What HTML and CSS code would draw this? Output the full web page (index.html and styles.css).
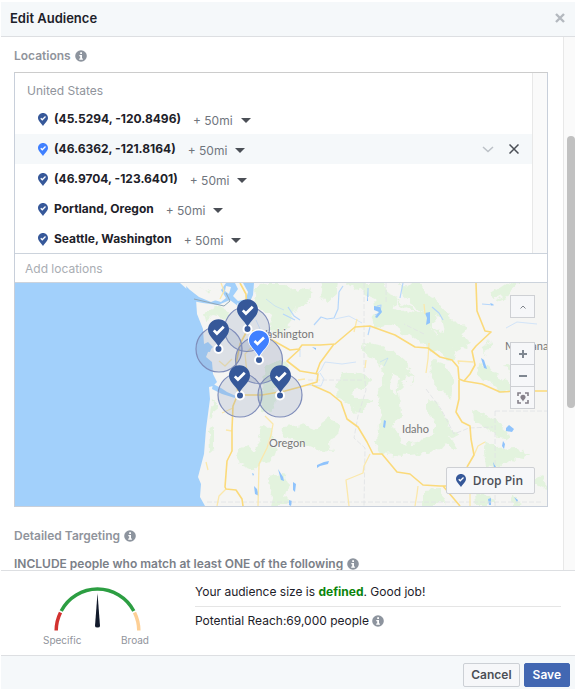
FILE: index.html
```html
<!DOCTYPE html>
<html lang="en">
<head>
<meta charset="utf-8">
<meta name="viewport" content="width=device-width, initial-scale=1">
<title>Edit Audience</title>
<link rel="stylesheet" href="styles.css">
</head>
<body>
<svg class="defs" aria-hidden="true">
  <symbol id="pin" viewBox="0 0 20 26">
    <path d="M10 0C4.400 0 0 4.300 0 9.800c0 6 6.500 9.700 10 16.200 3.500-6.500 10-10.200 10-16.200C20 4.300 15.600 0 10 0z" fill="currentColor"/>
    <path d="M5.500 10.500l3 3 6.500-6.500" fill="none" stroke="#fff" stroke-width="2.600"/>
  </symbol>
  <symbol id="info" viewBox="0 0 12 12">
    <circle cx="6" cy="6" r="5.800" fill="#8d949e"/>
    <path d="M5.200 2.200h1.800v1.700H5.200zM4.300 5h2.700v3.600h.9v1.200H4.200V8.600h1V6.200h-.9z" fill="#fff"/>
  </symbol>
</svg>
<main class="dialog">
  <header class="head">
    <h1>Edit Audience</h1>
    <button class="icon-btn" aria-label="Close"><svg width="10" height="10" viewBox="0 0 10 10"><path d="M1 1l8 8M9 1l-8 8" stroke="#b4b9bf" stroke-width="2.400"/></svg></button>
  </header>
  <div class="body">
    <div class="content">
      <h2>Locations <svg class="info"><use href="#info"/></svg></h2>
      <section class="picker">
        <div class="list">
          <div class="rows">
            <p class="country">United States</p>
            <ul>
              <li><svg class="pin"><use href="#pin"/></svg><b>(45.5294, -120.8496)</b><button class="radius">+ 50mi <i class="caret"></i></button></li>
              <li class="active"><svg class="pin"><use href="#pin"/></svg><b>(46.6362, -121.8164)</b><button class="radius">+ 50mi <i class="caret"></i></button>
                <span class="tools">
                  <button class="icon-btn" aria-label="Expand"><svg width="12" height="10" viewBox="0 0 12 10"><path d="M1 3l5 4.500L11 3" fill="none" stroke="#bcc1c7" stroke-width="1.500"/></svg></button>
                  <button class="icon-btn" aria-label="Remove"><svg width="10" height="10" viewBox="0 0 10 10"><path d="M.5.500l9 9M9.500.500l-9 9" stroke="#4b4f56" stroke-width="1.500"/></svg></button>
                </span></li>
              <li><svg class="pin"><use href="#pin"/></svg><b>(46.9704, -123.6401)</b><button class="radius">+ 50mi <i class="caret"></i></button></li>
              <li><svg class="pin"><use href="#pin"/></svg><b>Portland, Oregon</b><button class="radius">+ 50mi <i class="caret"></i></button></li>
              <li><svg class="pin"><use href="#pin"/></svg><b>Seattle, Washington</b><button class="radius">+ 50mi <i class="caret"></i></button></li>
            </ul>
          </div>
          <div class="track"></div>
        </div>
        <input class="add" type="text" placeholder="Add locations" aria-label="Add locations">
        <div class="map">
          <svg class="canvas" viewBox="15 284 532 223" preserveAspectRatio="xMidYMid slice" role="img" aria-label="Map of the targeted locations">
            <defs>
              <filter id="rough" x="-5%" y="-5%" width="110%" height="110%" color-interpolation-filters="sRGB">
                <feTurbulence type="fractalNoise" baseFrequency=".09" numOctaves="3" seed="4"/>
                <feDisplacementMap in="SourceGraphic" scale="13" xChannelSelector="R" yChannelSelector="G"/>
              </filter>
              <clipPath id="land"><path d="M181 280L196 300 197 315 203 330 204 345 211 352 209 357 212 362 213 375 216 385 211 388 212 400 208 430 206 455 200 478 203 485 202 498 207 510H550V280z"/></clipPath>
            </defs>
            <path fill="#f5f5f3" d="M15 284h532v223H15z"/>
            <g fill="#e3f3de" filter="url(#rough)" clip-path="url(#land)">
              <path d="M196 286l18 8-3 4-12-5zM204 314l14-7 12 5-3 8-12-2-9 4zM252 293l14-9h18l12 10 14-6 4 8-15 11-8 16-12 14-10-6 4-14-12-4zM266 365l18-6 5 8-16 8 3 14-8 10-6-12zM280 305l20-10 6 8-14 10-8 14-8-4z"/>
              <path d="M322 284l18-1-3 12-13 9-4-8zM346 284h38l8 14 20 8 16 12 8 18 11 6 10 17-4 3-22-11-21-15-21-8-13 2-7-14 9-2-2-14-17-7z"/>
              <path d="M364 344l13 3 20 10 15 13 2 13-15 9 2 24-8 10 9 18 14-2 22-8 9 8-7 8-17 4-19 3-20-3-10-13 7-14-2-34 6-16-8-14-13-10z"/>
              <path d="M422 293l11 4 12 15 17 17 7 18-12 8-16-12-11-20-12-15zM400 284l22 1 8 14-10 10-17-13zM431 360l15 5 6 16-4 17-6-7-10-11zM428 398l9 7 13 22 8 9-5 3-17-12-8-17zM436 424l12 10 8 13-6 3-17-17z"/>
              <path d="M337 383l7-9 16-2 9 7-1 7-12 3-5 6 12 8-3 5-16-4-8-8zM284 428l18-3 12 5 15-10 12 5-3 12-9 6 2 8-16 2-14-5-4-9-14-3zM342 390l12 9 18 2-8 10-16 1zM260 390l16 5-2 14-10 4-6-10z"/>
              <path d="M210 399l7 6-2 17-7-4zM208 431l7-1v21l-6 1zM238 456l5-8 12 4 8-10 14 5-3 15-14 1-6 8-14-6zM263 425l8 7-3 14-7 3-4-13zM270 475l14 3 6 12-4 17h-15l3-14z"/>
              <path d="M473 410l15 6 19 15 3 9-14-2-13-10-9-4zM480 362l8 4 8 11 15 9 4 9-14-3-17-12-8-5zM502 368l14-4 14 11-7 4-15-3zM483 442l15 7 18-1 13 8-4 6-17-2-11 10-11-3zM484 347l12-8-5 11-8 4zM536 480l8-3 4 9-8 4zM424 491l14-1 8 9-4 8h-18zM474 496l16 1 5 10h-19zM510 496l12 6-8 5zM492 294l15-10 12 2-10 9-15 7z"/>
            </g>
            <g fill="#f5f5f3" filter="url(#rough)">
              <path d="M393 377l7 3-3 15-5-4zM405 372l8 7-5 18-6-5zM356 293l7 5-3 7-8-5zM433 316l9 8 2 10-9-6zM381 365l5 9-4 6-4-9zM395 300l9 8 11 3-7 5-12-6z"/>
            </g>
            <path fill="#a2d0fb" d="M15 284h165l9 8 7 8 1 15 6 15 1 15 4-2 5 5-5 5-2 5 6 5 1 12 4 8-4 4-4 1 1 12-4 30-2 25-6 23 3 7-1 13 5 9H15z"/>
            <path fill="#a2d0fb" d="M186 284l12 4 13 12 10 3 5-4-5-8 5-7h9l3 6-5 7 5 5 8-2 2-7-5-9h11l-1 12-4 9 3 9-3 16-4-2 1-12-8-9-8-6-12 5-15-2-16-3z"/>
            <path fill="#a2d0fb" d="M203 348l8 2-1 3-7-1zM213 385l8 4 6 4 9 4-1 2-13-4-10-5z"/>
            <g fill="#f5f5f3"><path d="M183 284l9 0 13 7 11 10-5 2-12-5-9-7zM226 287l5 1-2 7-4-3zM242 296l4-3-1 9-3-1zM237 304l4 3 1 7-4-5zM207 287l9-3 6 2-4 5z"/></g>
            <path d="M194 300l17 4 13 3 6-5-4-8" fill="none" stroke="#91a7b7"/>
            <g fill="none" stroke="#b5d6fb" stroke-linejoin="round">
              <path d="M343 287l-4 6-1 17-4 9-7 1-6-2-7 8M288 308l6 9 6 4M283 315l12 6M368 289v9M403 284l-3 15M432 308l7 6 4 7M377 307l4-1-1 8-5 2M370 328l-2 8M482 305l12 1" stroke-width="1.200"/>
              <path d="M316 376l5-5 4-8 17 2 14-2M320 374l4 6-3 7-14-1M300 350v8M335 320l14-3 13 7M380 363l8-4-4 8M506 329l11-6 20 2M266 300l9 7 9 4M256 321l4 9" stroke-width="1" opacity=".55"/>
            </g>
            <g fill="#8fc3fc">
              <path d="M374 307l6 1 2 5-5 6-2-1 4-5-5-2zM425 314l5-1v11l-4 2 1-7zM481 359l3 2 3 9-3-1zM384 421l2 1-1 7-2-1zM317 466l7-3 5-1-1 3-8 2-3 2zM293 483l3 2-1 8-2-2zM254 487l3 3 2 7-4-2zM289 501l3 1-1 5-2-1zM278 470l5 8 1 4-3-1zM252 474l2 1-1 2zM506 429l3-3 5 4-2 3-6-1zM503 442l2 3-1 5-2-3zM488 500l3-1v7h-2zM514 498l4 3-1 2zM368 292v10h-1zM490 304l3 1-1 2zM493 463l3 5h-2zM312 348l4 1v2z"/>
            </g>
            <g fill="none" stroke="#e0e2e4" stroke-width=".8" stroke-dasharray="5 2">
              <path d="M364 284v90l2 17-8 26-4 22 11 10-1 58M207 503h336M386 284v21M308 381h56M424 335l-20-10M426 390l15 20 13 25 15-6 24-1M495 412v95M495 412h52"/>
            </g>
            <g fill="none" stroke="#fbe8ab" stroke-width="1.300" stroke-linejoin="round">
              <path d="M221 284l3 8-4 8M265 417l8 8-2 11-4 13-8 16-1 42M226 490l-7 7-2 10M370 455l-6 12-1 7-17 7 3 26M418 487l-1 8-2 12M474 456l4-9 7-4M470 490v17M357 320l-3 13M366 361l-1 8M305 380l-7 1M424 305l1 10M429 344l-1 16-2 14M459 365l-1-3 15 1M255 345l-10 10 2 19M232 360l-7 7-6-5M206 463l2 8M232 432l-6-1M222 414l11-5"/>
            </g>
            <g fill="none" stroke="#fbda7a" stroke-width="1.600" stroke-linejoin="round">
              <path d="M240 284l6 11 1 25 1 10-8 15-5 25 3 25-5 12-1 23v22l-5 10-2 26 1 2 10 1 6 9 1 7M248 330l17 7 25 14 9-1 3-4h18l15-1 20-17 15-1 25 9 20 12 13 1 12 9 12 3 6 7 1 12 5 2 18 3 18 8 18-1h29"/>
              <path d="M300 350l-13 12 13 10 18 3-1 8-17 5-15 4-23 4-22 0M334 345l-14 19-4 11M312 386l18 8 11 9 6 17 11 8 9 15 6 12h9l15 18 13 2 13 11 17 1h15M443 487l17 20M476 284l1 28 8 20 6 1-15 14-4 5 3 14-5 9-6 7M459 381v19l-3 13 6 10 8 4 1 13 3 16-7 12"/>
            </g>
            <g class="places"><text x="256" y="339">Washington</text><text x="269" y="448">Oregon</text><text x="402" y="434">Idaho</text><text x="505" y="351">Montana</text></g>
            <g fill="#8395bc" fill-opacity=".22" stroke="#7f8dba" stroke-width="1.200">
              <circle cx="247" cy="330" r="22.500"/><circle cx="219" cy="350" r="23"/><circle cx="240" cy="396" r="22"/><circle cx="280" cy="396" r="22"/><circle cx="259" cy="361" r="23.500" fill="#6878a5"/>
            </g>
            <g fill="#365899" stroke="#fff" stroke-width="2">
              <circle cx="247.500" cy="330" r="4"/><circle cx="218.500" cy="350" r="4"/><circle cx="240" cy="396.500" r="4"/><circle cx="280" cy="396.500" r="4"/><circle cx="259" cy="361" r="4"/>
            </g>
            <g color="#365899">
              <use href="#pin" x="237" y="300" width="21" height="28"/>
              <use href="#pin" x="208" y="320" width="21" height="28"/>
              <use href="#pin" x="229" y="366" width="21" height="28"/>
              <use href="#pin" x="270" y="366" width="21" height="28"/>
            </g>
            <path d="M259 330c-6 0-11 5-11 11 0 6 7 10 11 18 4-8 11-12 11-18 0-6-5-11-11-11z" fill="#fff"/>
            <use href="#pin" x="249" y="331" width="20" height="27" color="#4080ff"/>
          </svg>
          <div class="controls">
            <button aria-label="Collapse map"><svg width="8" height="6" viewBox="0 0 8 6"><path d="M1.500 4.500L4 2l2.500 2.500" fill="none" stroke="#7f848c"/></svg></button>
            <div class="zoom">
              <button aria-label="Zoom in"><svg width="8" height="8" viewBox="0 0 8 8"><path d="M4 0v8M0 4h8" stroke="#7f8791" stroke-width="2"/></svg></button>
              <button aria-label="Zoom out"><svg width="8" height="8" viewBox="0 0 8 8"><path d="M0 4h8" stroke="#7f8791" stroke-width="2"/></svg></button>
              <button aria-label="Fit pins"><svg width="12" height="12" viewBox="0 0 12 12"><path d="M4 1H1v3M8 1h3v3M4 11H1V8M8 11h3V8" fill="none" stroke="#858089" stroke-width="1.600"/><path d="M6 2.700a2.600 2.600 0 0 0-2.600 2.600C3.400 7 5.300 7.500 6 9.500c.7-2 2.600-2.500 2.600-4.200A2.600 2.600 0 0 0 6 2.700z" fill="#858089"/></svg></button>
            </div>
          </div>
          <button class="drop"><svg class="pin"><use href="#pin"/></svg>Drop Pin</button>
        </div>
      </section>
      <h2 class="detail">Detailed Targeting <svg class="info"><use href="#info"/></svg></h2>
      <h3>INCLUDE people who match at least ONE of the following <svg class="info"><use href="#info"/></svg></h3>
    </div>
    <div class="scroll"><div class="thumb"></div></div>
  </div>
  <section class="summary">
    <div class="gauge">
      <svg width="90" height="48" viewBox="52 584 90 48" aria-hidden="true">
        <g fill="none" stroke-width="3.500">
          <path d="M56.200 629.500A41 41 0 0 1 60.500 611.500" stroke="#d2322f"/>
          <path d="M61.200 610A41 41 0 0 1 133.800 610" stroke="#2c9e42"/>
          <path d="M134.500 611.500A41 41 0 0 1 138.800 629.500" stroke="#fdcf95"/>
        </g>
        <path d="M97.500 592L95 625a2.500 1.500 0 0 0 5 0z" fill="#121a2b"/>
      </svg>
      <div class="ends"><span>Specific</span><span>Broad</span></div>
    </div>
    <div class="facts">
      <p>Your audience size is <strong>defined</strong>. Good job!</p>
      <p>Potential Reach:69,000 people <svg class="info"><use href="#info"/></svg></p>
    </div>
  </section>
  <footer class="foot"><button class="btn">Cancel</button><button class="btn primary">Save</button></footer>
</main>
</body>
</html>
```

FILE: styles.css
```css
* { box-sizing: border-box; }
body { margin: 0; background: #fff; color: #1d2129; font: 12px/16px Inter, "Liberation Sans", sans-serif; }
h1, h2, h3, p, ul { margin: 0; padding: 0; }
button { font: inherit; color: inherit; cursor: pointer; }
.defs { position: absolute; width: 0; height: 0; }
.dialog { display: flex; flex-direction: column; height: 100vh; padding: 2px 0 0 1px; }

.head { display: flex; align-items: center; justify-content: space-between; flex: none; height: 35px; padding: 0 10px 2px 9px; background: #f5f8fa; border-bottom: 1px solid #dddfe2; }
h1 { font-size: 13px; line-height: 20px; font-weight: 600; }
.icon-btn { display: flex; padding: 0; border: 0; background: none; }

.body { display: flex; flex: 1; min-height: 0; overflow: hidden; }
.content { flex: 1; min-width: 0; padding: 11px 15px 0 13px; }
h2, h3 { display: flex; align-items: center; gap: 4px; font-size: 12px; line-height: 16px; font-weight: 600; color: #90949c; }
h3 { margin-top: 12px; color: #7b8088; white-space: nowrap; }
.info { flex: none; width: 12px; height: 12px; }
.scroll { flex: none; width: 12px; padding: 99px 0 0 3px; border-left: 1px solid #e8e8e8; background: #fafafa; }
.thumb { width: 8px; height: 272px; border-radius: 4px; background: #c1c1c1; }

.picker { margin-top: 8px; border: 1px solid #c8cfda; border-top-color: #ccc; }
.list { display: flex; height: 180px; overflow: hidden; }
.rows { flex: 1; }
.track { flex: none; width: 15px; border-left: 1px solid #e8e8e8; background: #fafafa; }
.country { padding: 10px 12px 5px; color: #90949c; }
ul { list-style: none; }
li { display: flex; align-items: center; height: 30px; padding: 0 13px 0 23px; }
li b { margin: 0 12px 0 6px; color: #1d2129; font-weight: 700; }
.active { background: #f5f8fa; }
.pin { flex: none; width: 10px; height: 13px; color: #365899; }
.active .pin { color: #4080ff; }
.radius { display: flex; align-items: center; gap: 8px; padding: 3px 0 0; border: 0; background: none; color: #70757d; }
.caret { border: 5px solid transparent; border-top-color: #4b4f56; border-bottom: 0; }
.tools { display: flex; align-items: center; gap: 15px; margin-left: auto; }
.add { display: block; width: 100%; height: 30px; padding: 0 10px; border: 1px solid #ccd3dc; border-width: 1px 0; background: #fff; font: inherit; }
.add::placeholder { color: #a9adb3; opacity: 1; }

.map { position: relative; height: 223px; overflow: hidden; background: #a2d0fb; }
.canvas { display: block; width: 100%; height: 100%; }
.places { fill: #777; font: 11px Lato, "Open Sans", sans-serif; paint-order: stroke; stroke: #f5f5f3; stroke-width: 1px; }
.controls { position: absolute; top: 12px; right: 12px; display: flex; flex-direction: column; gap: 24px; }
.controls button { display: flex; align-items: center; justify-content: center; width: 25px; height: 23px; padding: 0; border: 1px solid #ced0d4; background: #f6f7f9; }
.zoom button + button { margin-top: -1px; }
.drop { position: absolute; right: 12px; bottom: 12px; display: flex; align-items: center; gap: 7px; height: 27px; padding: 0 11px 0 9px; border: 1px solid #ced0d4; border-radius: 2px; background: #f6f7f9; color: #4b4f56; font-family: "Open Sans", sans-serif; font-weight: 600; }
.detail { margin-top: 21px; }

.summary { display: flex; flex: none; height: 85px; border-top: 1px solid #dddfe2; }
.gauge { flex: none; width: 194px; padding: 14px 0 0 42px; font-size: 10px; line-height: 14px; color: #90949c; }
.gauge svg { display: block; margin-left: 9px; }
.ends { display: flex; justify-content: space-between; width: 106px; }
.facts { flex: 1; padding: 7px 14px 0 0; }
.facts p { display: flex; align-items: center; height: 28px; white-space: pre; }
.facts p + p { border-top: 1px solid #e5e5e5; }
.facts strong { color: #0b850b; }

.foot { display: flex; flex: none; align-items: flex-start; justify-content: flex-end; gap: 4px; height: 34px; padding: 7px 5px 0 0; background: #f5f8fa; border-top: 1px solid #dddfe2; }
.btn { height: 24px; padding: 0 7px; border: 1px solid #ccd0d5; border-radius: 2px; background: #f6f7f9; color: #4b4f56; font-weight: 600; }
.primary { padding: 0 8px; border-color: #4267b2; background: #4267b2; color: #fff; }
```
